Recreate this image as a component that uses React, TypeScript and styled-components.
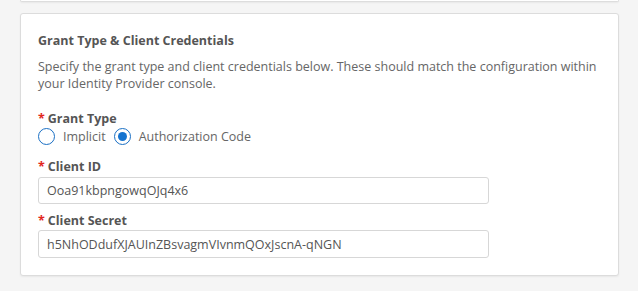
import styled, { createGlobalStyle } from "styled-components";

const GlobalStyle = createGlobalStyle`
  html, body {
    margin: 0;
    padding: 0;
    background: #f5f5f5;
    font-family: "Open Sans", "Liberation Sans", sans-serif;
    color: #555;
  }
`;

const Page = styled.div`
  width: 638px;
  height: 291px;
  overflow: hidden;
  background: #f5f5f5;
  display: flex;
  flex-direction: column;
  gap: 11px;
`;

const PrevCard = styled.div`
  margin: 0 19px 0 20px;
  height: 1px;
  background: #fff;
  border: 1px solid #ddd;
  border-top: none;
  border-radius: 0 0 3px 3px;
  box-shadow: 0 1px 2px rgba(0, 0, 0, 0.06);
`;

const Card = styled.section`
  margin: 0 19px 0 20px;
  height: 263px;
  box-sizing: border-box;
  background: #fff;
  border: 1px solid #dcdcdc;
  border-radius: 3px;
  box-shadow: 0 1px 2px rgba(0, 0, 0, 0.06);
  padding: 18px 17px 0 17px;
`;

const Title = styled.h3`
  margin: 0;
  font-size: 12.5px;
  font-weight: 700;
  line-height: 18px;
  color: #555;
`;

const Description = styled.p`
  margin: 8px 0 0;
  font-size: 12.5px;
  line-height: 17px;
  color: #666;
`;

const Field = styled.div<{ $top: number }>`
  margin-top: ${(p) => p.$top}px;
  display: flex;
  flex-direction: column;
`;

const Label = styled.label`
  font-size: 12.5px;
  font-weight: 700;
  line-height: 16px;
  color: #555;
  display: flex;
  align-items: center;
  gap: 3px;
`;

const Required = styled.span`
  color: #e2261c;
  font-weight: 700;
`;

const RadioRow = styled.div`
  display: flex;
  align-items: center;
  height: 18px;
`;

const RadioOption = styled.label`
  display: flex;
  align-items: center;
  gap: 8px;
  margin-right: 8px;
  font-size: 12.5px;
  color: #666;
`;

const RadioCircle = styled.span<{ $checked?: boolean }>`
  width: 17px;
  height: 17px;
  box-sizing: border-box;
  border-radius: 50%;
  border: 1.5px solid #1a6fc4;
  background: #fff;
  display: flex;
  align-items: center;
  justify-content: center;
  &::after {
    content: "";
    width: 9px;
    height: 9px;
    border-radius: 50%;
    background: ${(p) => (p.$checked ? "#1473d0" : "transparent")};
  }
`;

const Input = styled.div<{ $h: number; $top: number }>`
  margin-top: ${(p) => p.$top}px;
  width: 451px;
  height: ${(p) => p.$h}px;
  box-sizing: border-box;
  border: 1px solid #d7d7d7;
  border-radius: 3px;
  padding: 0 8px;
  display: flex;
  align-items: center;
  font-size: 12.5px;
  color: #555;
`;

export default function App() {
  return (
    <Page>
      <GlobalStyle />
      <PrevCard />
      <Card>
        <Title>Grant Type &amp; Client Credentials</Title>
        <Description>
          Specify the grant type and client credentials below. These should match the configuration within
          your Identity Provider console.
        </Description>
        <Field $top={19}>
          <Label>
            <Required>*</Required>Grant Type
          </Label>
          <RadioRow>
            <RadioOption>
              <RadioCircle />
              Implicit
            </RadioOption>
            <RadioOption>
              <RadioCircle $checked />
              Authorization Code
            </RadioOption>
          </RadioRow>
        </Field>
        <Field $top={14}>
          <Label>
            <Required>*</Required>Client ID
          </Label>
          <Input $h={27} $top={2}>Ooa91kbpngowqOJq4x6</Input>
        </Field>
        <Field $top={9}>
          <Label>
            <Required>*</Required>Client Secret
          </Label>
          <Input $h={28} $top={1}>h5NhODdufXJAUInZBsvagmVIvnmQOxJscnA-qNGN</Input>
        </Field>
      </Card>
    </Page>
  );
}
